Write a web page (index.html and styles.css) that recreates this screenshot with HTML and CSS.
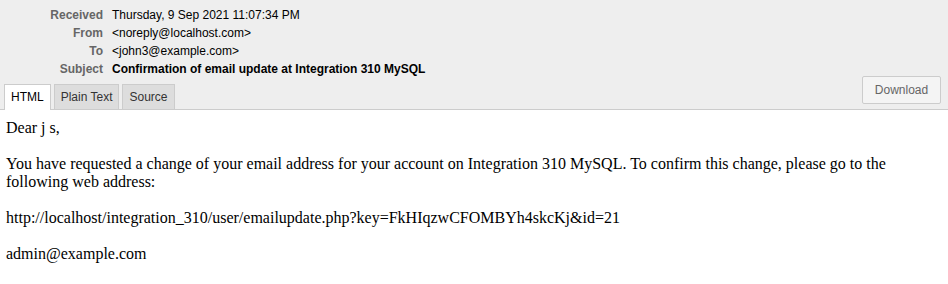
FILE: index.html
```html
<!DOCTYPE html>
<html lang="en">
<head>
    <meta charset="UTF-8">
    <title>Message</title>
    <link rel="stylesheet" href="styles.css">
</head>
<body>
    <div class="message-header">
        <table class="header-table">
            <tr>
                <th>Received</th>
                <td>Thursday, 9 Sep 2021 11:07:34 PM</td>
            </tr>
            <tr>
                <th>From</th>
                <td>&lt;noreply@localhost.com&gt;</td>
            </tr>
            <tr>
                <th>To</th>
                <td>&lt;john3@example.com&gt;</td>
            </tr>
            <tr>
                <th>Subject</th>
                <td class="subject">Confirmation of email update at Integration 310 MySQL</td>
            </tr>
        </table>
        <div class="tab-bar">
            <div class="tabs">
                <span class="tab active">HTML</span>
                <span class="tab">Plain Text</span>
                <span class="tab">Source</span>
            </div>
            <button class="download">Download</button>
        </div>
    </div>

    <div class="message-body">
        Dear j s,<br>
        <br>
        You have requested a change of your email address for your account on Integration 310 MySQL. To confirm this change, please go to the following web address:<br>
        <br>
        http://localhost/integration_310/user/emailupdate.php?key=FkHIqzwCFOMBYh4skcKj&amp;id=21<br>
        <br>
        admin@example.com
    </div>
</body>
</html>
```

FILE: styles.css
```css
* {
    margin: 0;
    padding: 0;
    box-sizing: border-box;
}

body {
    background: #ffffff;
    font-family: 'Liberation Sans', Arial, sans-serif;
    font-size: 12px;
    color: #000000;
}

.message-header {
    background: #eeeeee;
    border-bottom: 1px solid #cccccc;
    padding-top: 6px;
}

.header-table {
    border-collapse: collapse;
}

.header-table th {
    width: 112px;
    text-align: right;
    color: #666666;
    font-weight: bold;
    padding: 0 9px 0 0;
    height: 18px;
    line-height: 18px;
    vertical-align: middle;
}

.header-table td {
    padding: 0;
    height: 18px;
    line-height: 18px;
}

.header-table .subject {
    font-weight: bold;
}

.tab-bar {
    display: flex;
    justify-content: space-between;
    align-items: flex-end;
    padding: 0 7px 0 4px;
    margin-top: -2px;
}

.tabs {
    display: flex;
    gap: 3px;
}

.tab {
    display: block;
    height: 25px;
    line-height: 24px;
    padding: 0 6px;
    background: #dddddd;
    border: 1px solid #cccccc;
    border-bottom: none;
    color: #333333;
}

.tab.active {
    background: #ffffff;
    color: #000000;
    height: 26px;
    margin-bottom: -1px;
}

.download {
    font-family: inherit;
    font-size: 12px;
    color: #666666;
    background: #f4f4f4;
    border: 1px solid #cccccc;
    border-radius: 2px;
    width: 79px;
    height: 28px;
    margin-bottom: 5px;
}

.message-body {
    font-family: 'Liberation Serif', 'Times New Roman', serif;
    font-size: 16px;
    line-height: 18px;
    padding: 9px 6px;
}
```
